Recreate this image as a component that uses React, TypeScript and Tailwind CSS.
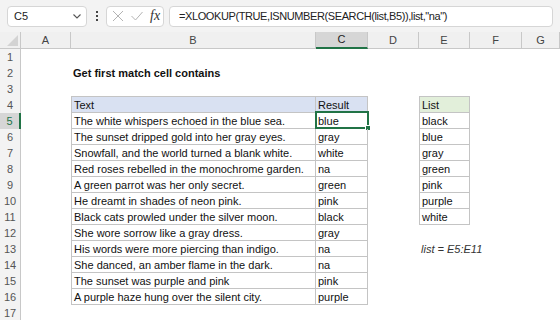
import React from 'react';

const COLS = ['A', 'B', 'C', 'D', 'E', 'F', 'G'];

// [text, result, list]
const rows: Record<number, { b?: string; c?: string; e?: string }> = {
  2: { b: 'Get first match cell contains' },
  4: { b: 'Text', c: 'Result', e: 'List' },
  5: { b: 'The white whispers echoed in the blue sea.', c: 'blue', e: 'black' },
  6: { b: 'The sunset dripped gold into her gray eyes.', c: 'gray', e: 'blue' },
  7: { b: 'Snowfall, and the world turned a blank white.', c: 'white', e: 'gray' },
  8: { b: 'Red roses rebelled in the monochrome garden.', c: 'na', e: 'green' },
  9: { b: 'A green parrot was her only secret.', c: 'green', e: 'pink' },
  10: { b: 'He dreamt in shades of neon pink.', c: 'pink', e: 'purple' },
  11: { b: 'Black cats prowled under the silver moon.', c: 'black', e: 'white' },
  12: { b: 'She wore sorrow like a gray dress.', c: 'gray' },
  13: { b: 'His words were more piercing than indigo.', c: 'na' },
  14: { b: 'She danced, an amber flame in the dark.', c: 'na' },
  15: { b: 'The sunset was purple and pink', c: 'pink' },
  16: { b: 'A purple haze hung over the silent city.', c: 'purple' },
};

function FormulaBar() {
  return (
    <div className="flex h-[32px] items-center gap-[5px] bg-[#f3f3f3] px-[7px]">
      <div className="flex h-[21px] w-[80px] items-center justify-between rounded-[4px] border border-[#d6d6d6] bg-white pl-[6px] pr-[5px] text-[11px] text-[#222]">
        <span>C5</span>
        <svg width="8" height="5" viewBox="0 0 8 5" fill="none" stroke="#555" strokeWidth="1.1">
          <path d="M0.5 0.5 L4 4 L7.5 0.5" />
        </svg>
      </div>
      <div className="flex w-[9px] flex-col items-center gap-[2px]">
        <span className="h-[2px] w-[2px] bg-[#444]" />
        <span className="h-[2px] w-[2px] bg-[#444]" />
        <span className="h-[2px] w-[2px] bg-[#444]" />
      </div>
      <div className="flex h-[21px] w-[58px] items-center gap-[7px] rounded-[4px] border border-[#d6d6d6] bg-white pl-[5px]">
        <svg width="12" height="12" viewBox="0 0 12 12" stroke="#b3b3b3" strokeWidth="1">
          <path d="M1 1 L11 11 M11 1 L1 11" />
        </svg>
        <svg width="12" height="10" viewBox="0 0 12 10" fill="none" stroke="#b3b3b3" strokeWidth="1">
          <path d="M0.5 5 L4.5 9 L11.5 1" />
        </svg>
        <span className="font-['Liberation_Serif',serif] text-[14px] italic leading-none text-[#333]">fx</span>
      </div>
      <div className="flex h-[21px] flex-1 items-center rounded-[4px] border border-[#d6d6d6] bg-white pl-[9px] text-[11px] tracking-[-0.4px] text-[#222]">
        =XLOOKUP(TRUE,ISNUMBER(SEARCH(list,B5)),list,"na")
      </div>
    </div>
  );
}

function Sheet() {
  const cells: React.ReactNode[] = [];

  // column header row
  cells.push(
    <div key="corner" className="relative h-[17px] border-b border-r border-[#c8c8c8] bg-[#f0f0f0]">
      <svg className="absolute bottom-[2px] right-[2px]" width="11" height="11" viewBox="0 0 11 11">
        <path d="M11 0 L11 11 L0 11 Z" fill="#d3d3d3" />
      </svg>
    </div>
  );
  COLS.forEach((c) => {
    const sel = c === 'C';
    cells.push(
      <div
        key={'h' + c}
        className={
          sel
            ? 'flex h-[17px] items-center justify-center border-b-2 border-r border-b-[#217346] border-r-[#c8c8c8] bg-[#d6d6d6] text-[11px] text-[#222]'
            : 'flex h-[17px] items-center justify-center border-b border-r border-[#c8c8c8] bg-[#f0f0f0] text-[11px] text-[#444]'
        }
      >
        {c}
      </div>
    );
  });

  for (let r = 1; r <= 17; r++) {
    const d = rows[r] || {};
    const selRow = r === 5;
    cells.push(
      <div
        key={'r' + r}
        className={
          selRow
            ? 'flex h-[16px] items-center justify-center border-r-2 border-r-[#217346] bg-[#d6d6d6] text-[11px] text-[#217346]'
            : 'flex h-[16px] items-center justify-center border-r border-[#c8c8c8] bg-[#f3f3f3] text-[11px] text-[#555]'
        }
      >
        {r}
      </div>
    );

    const inTable = r >= 4 && r <= 16;
    const inList = r >= 4 && r <= 11;
    const topEdge = r === 3;

    // A
    cells.push(<div key={r + 'A'} className="h-[16px]" />);

    // B
    let bCls = 'h-[16px] whitespace-nowrap pl-[2px] text-[11px] leading-[16px] text-[#111]';
    if (inTable) bCls += ' border-b border-l border-r border-[#c4c4c4]';
    if (topEdge) bCls += ' border-b border-[#c4c4c4]';
    if (r === 4) bCls += ' bg-[#d9e1f2]';
    if (r === 2) bCls += ' font-bold';
    cells.push(
      <div key={r + 'B'} className={bCls}>
        {d.b}
      </div>
    );

    // C
    let cCls = 'relative h-[16px] whitespace-nowrap pl-[2px] text-[11px] leading-[16px] text-[#111]';
    if (inTable) cCls += ' border-b border-r border-[#c4c4c4]';
    if (topEdge) cCls += ' border-b border-[#c4c4c4]';
    if (r === 4) cCls += ' bg-[#d9e1f2]';
    cells.push(
      <div key={r + 'C'} className={cCls}>
        {d.c}
        {r === 5 && (
          <>
            <div className="absolute left-[-1px] top-[-2px] h-[18px] w-[54px] border-2 border-[#217346]" />
            <div className="absolute left-[49px] top-[12px] h-[6px] w-[6px] border border-white bg-[#217346]" />
          </>
        )}
      </div>
    );

    // D
    cells.push(<div key={r + 'D'} className="h-[16px]" />);

    // E
    let eCls = 'h-[16px] whitespace-nowrap pl-[2px] text-[11px] leading-[16px] text-[#111]';
    if (inList) eCls += ' border-b border-l border-r border-[#c4c4c4]';
    if (topEdge) eCls += ' border-b border-[#c4c4c4]';
    if (r === 4) eCls += ' bg-[#e2efda]';
    cells.push(
      <div key={r + 'E'} className={eCls}>
        {d.e}
        {r === 13 && <span className="italic text-[#333]">list = E5:E11</span>}
      </div>
    );

    cells.push(<div key={r + 'F'} className="h-[16px]" />);
    cells.push(<div key={r + 'G'} className="h-[16px]" />);
  }

  return (
    <div className="grid grid-cols-[21px_50px_245px_52px_51px_51px_52px_1fr] bg-white">
      {cells}
    </div>
  );
}

export default function App() {
  return (
    <div className="h-[320px] w-[560px] overflow-hidden bg-white font-['Liberation_Sans',Arial,sans-serif]">
      <FormulaBar />
      <Sheet />
    </div>
  );
}
